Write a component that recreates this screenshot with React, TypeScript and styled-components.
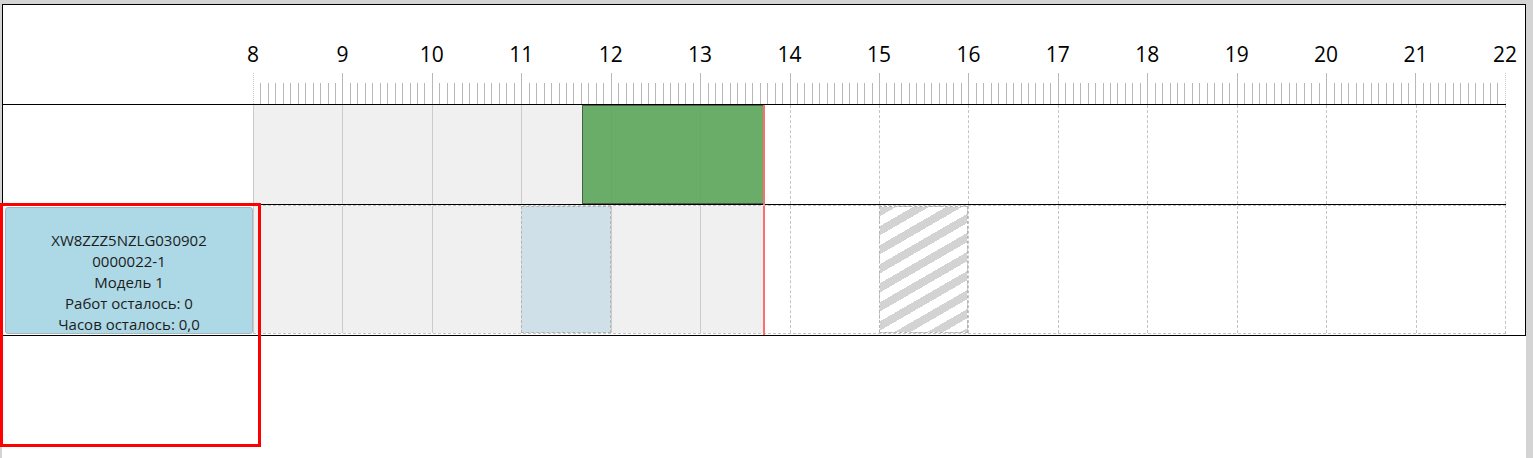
import React from 'react';
import styled, { createGlobalStyle } from 'styled-components';

const START_HOUR = 8;
const END_HOUR = 22;
const HOURS = END_HOUR - START_HOUR;
const TICKS_PER_HOUR = 12;
const NOW = 13 + 43 / 60;

const toLeft = (hour: number) => `${((hour - START_HOUR) / HOURS) * 100}%`;
const toWidth = (from: number, to: number) => `${((to - from) / HOURS) * 100}%`;

const hours = Array.from({ length: HOURS + 1 }, (_, i) => START_HOUR + i);
const cells = hours.slice(0, HOURS);

const GlobalStyle = createGlobalStyle`
	html, body {
		margin: 0;
		padding: 0;
		background: #d4d4d4;
	}
	* {
		box-sizing: border-box;
	}
`;

const Screen = styled.div`
	position: relative;
	min-height: 100vh;
	padding: 4px 7px 0 2px;
	font-family: 'Open Sans', 'Noto Sans', sans-serif;
	color: #000;
`;

const Panel = styled.div`
	min-height: 454px;
	background: #fff;
`;

const Board = styled.div`
	border: 1px solid #000;
	background: #fff;
`;

const RowMain = styled.div<{ $height: number; $divider?: boolean }>`
	display: flex;
	width: 1503px;
	height: ${({ $height }) => $height}px;
	border-bottom: ${({ $divider }) => ($divider ? '1px solid #000' : 'none')};
`;

const LabelCell = styled.div`
	width: 250px;
	flex: none;
	padding: 2px 0 1px 2px;
`;

const Scale = styled.div`
	width: 1253px;
	display: flex;
	flex-direction: column;
	justify-content: space-between;
`;

const HourLabels = styled.div`
	display: flex;
	justify-content: space-between;
	padding-right: 1px;
	margin-top: 35px;
`;

const HourLabel = styled.span`
	width: 0;
	display: flex;
	justify-content: center;
	white-space: nowrap;
	font-size: 21px;
	line-height: 28px;
`;

const TickRow = styled.div`
	display: flex;
	height: 31px;
	border-right: 1px dotted #c8c8c8;
`;

const HourTicks = styled.div`
	flex: 1;
	display: flex;
	align-items: flex-end;
	height: 100%;
`;

const Tick = styled.div<{ $major?: boolean; $edge?: boolean }>`
	flex: 1;
	height: ${({ $major }) => ($major ? '31px' : '21px')};
	border-left: 1px ${({ $edge }) => ($edge ? 'dotted #c8c8c8' : 'solid #b8b8b8')};
`;

const Track = styled.div<{ $height: number; $framed?: boolean }>`
	position: relative;
	display: grid;
	grid-template-columns: repeat(${HOURS}, 1fr);
	width: 1253px;
	height: ${({ $height }) => $height}px;
	border-right: 1px dashed #c4c4c4;
	border-top: ${({ $framed }) => ($framed ? '1px dashed #c4c4c4' : 'none')};
	border-bottom: ${({ $framed }) => ($framed ? '1px dashed #c4c4c4' : 'none')};
`;

const PastArea = styled.div`
	position: absolute;
	top: 0;
	bottom: 0;
	left: 0;
	background: #f0f0f0;
`;

const HourCell = styled.div<{ $past?: boolean }>`
	position: relative;
	border-left: 1px ${({ $past }) => ($past ? 'solid #cbcbcb' : 'dashed #c4c4c4')};
`;

const Block = styled.div<{ $kind: 'work' | 'planned' | 'blocked' }>`
	position: absolute;
	top: 0;
	bottom: 0;
	border: 1px ${({ $kind }) => ($kind === 'work' ? 'solid rgba(70, 80, 70, 0.85)' : 'dashed #b4b4b4')};
	background: ${({ $kind }) =>
		$kind === 'work'
			? 'rgba(90, 165, 90, 0.9)'
			: $kind === 'planned'
				? '#d0e0e8'
				: 'repeating-linear-gradient(150deg, #d3d3d3 0 8px, #fff 8px 16.5px)'};
`;

const NowLine = styled.div`
	position: absolute;
	top: 0;
	bottom: -2px;
	width: 2px;
	margin-left: -1px;
	background: #ff6e6e;
`;

const Card = styled.div`
	display: flex;
	flex-direction: column;
	align-items: center;
	height: 127px;
	padding-top: 22px;
	overflow: hidden;
	background: #add8e6;
	border: 1px solid #a6b6bc;
	border-radius: 3px;
	font-size: 15px;
	line-height: 21px;
	color: #1c1c1c;
	white-space: nowrap;
`;

const Selection = styled.div`
	position: absolute;
	left: 0;
	top: 203px;
	width: 261px;
	height: 244px;
	border: 3px solid #ff0000;
	pointer-events: none;
`;

interface TimeBlock {
	id: string;
	from: number;
	to: number;
	kind: 'work' | 'planned' | 'blocked';
}

interface Lane {
	id: string;
	height: number;
	framed?: boolean;
	lines?: string[];
	blocks: TimeBlock[];
}

const lanes: Lane[] = [
	{
		id: 'post',
		height: 99,
		blocks: [{ id: 'w1', from: 11 + 41 / 60, to: NOW, kind: 'work' }]
	},
	{
		id: 'order',
		height: 129,
		framed: true,
		lines: ['XW8ZZZ5NZLG030902', '0000022-1', 'Модель 1', 'Работ осталось: 0', 'Часов осталось: 0,0'],
		blocks: [
			{ id: 'p1', from: 11, to: 12, kind: 'planned' },
			{ id: 'b1', from: 15, to: 16, kind: 'blocked' }
		]
	}
];

const App: React.FC = () => (
	<Screen>
		<GlobalStyle />
		<Panel>
			<Board>
				<RowMain $height={100} $divider>
					<LabelCell />
					<Scale>
						<HourLabels>
							{hours.map((h) => (
								<HourLabel key={h}>{h}</HourLabel>
							))}
						</HourLabels>
						<TickRow>
							{cells.map((h) => (
								<HourTicks key={h}>
									{Array.from({ length: TICKS_PER_HOUR }, (_, i) => (
										<Tick key={i} $major={i === 0} $edge={i === 0 && h === START_HOUR} />
									))}
								</HourTicks>
							))}
						</TickRow>
					</Scale>
				</RowMain>
				{lanes.map((lane, idx) => (
					<RowMain key={lane.id} $height={lane.height + 1} $divider={idx < lanes.length - 1}>
						<LabelCell>
							{lane.lines && (
								<Card>
									{lane.lines.map((line) => (
										<span key={line}>{line}</span>
									))}
								</Card>
							)}
						</LabelCell>
						<Track $height={lane.height} $framed={lane.framed}>
							<PastArea style={{ width: toWidth(START_HOUR, NOW) }} />
							{cells.map((h) => (
								<HourCell key={h} $past={h < NOW} />
							))}
							{lane.blocks.map((b) => (
								<Block
									key={b.id}
									$kind={b.kind}
									style={{ left: toLeft(b.from), width: toWidth(b.from, b.to) }}
								/>
							))}
							<NowLine style={{ left: toLeft(NOW) }} />
						</Track>
					</RowMain>
				))}
			</Board>
		</Panel>
		<Selection />
	</Screen>
);

export default App;
